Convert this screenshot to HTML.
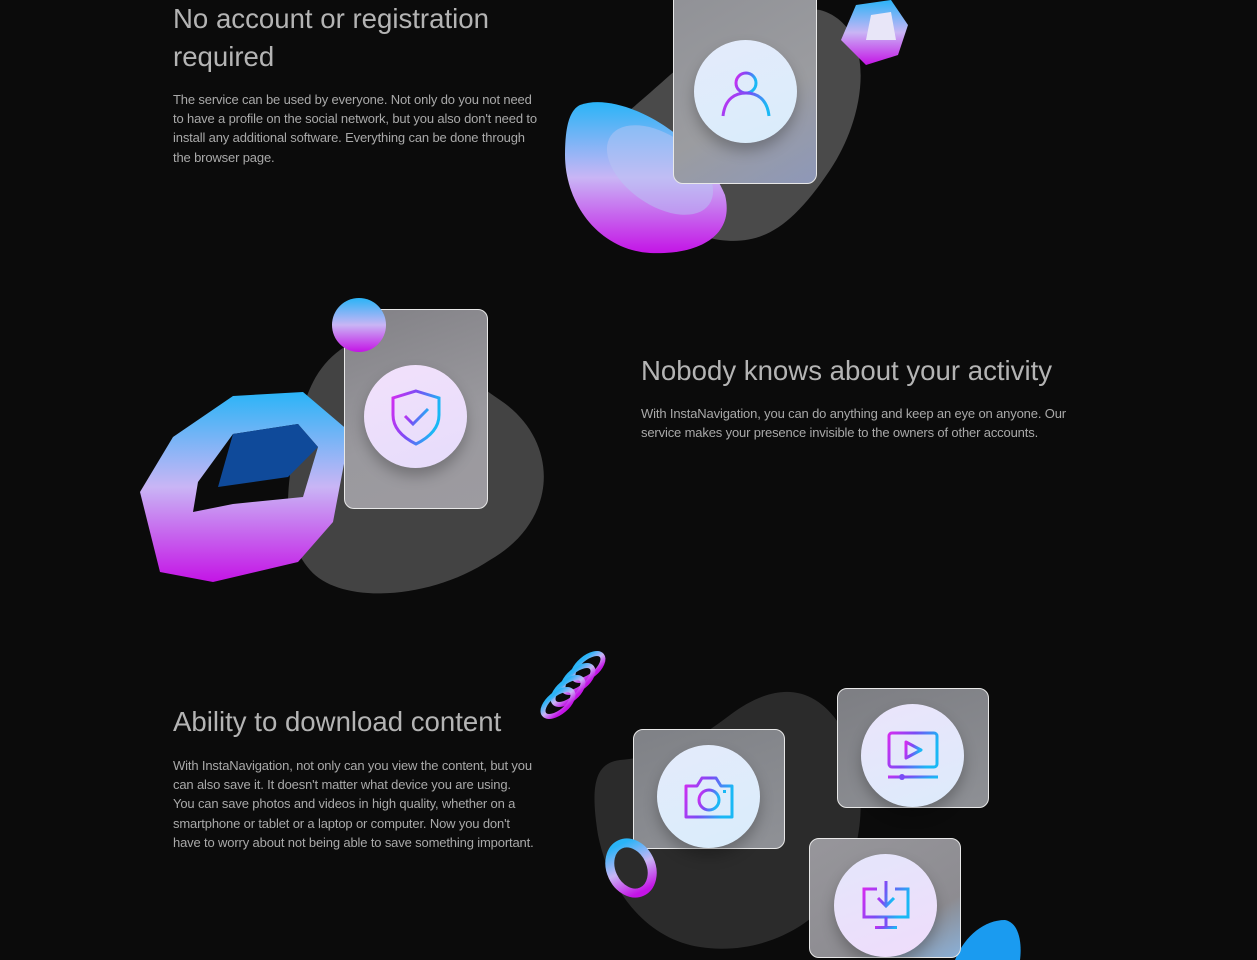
<!DOCTYPE html>
<html><head><meta charset="utf-8"><style>
*{margin:0;padding:0;box-sizing:border-box}
body{width:1257px;height:960px;background:#0b0b0b;overflow:hidden;position:relative;font-family:"Liberation Sans",sans-serif}
.a{position:absolute}
h2{position:absolute;color:#b4b4b4;font-weight:500;font-size:27.6px;line-height:38px;letter-spacing:0px;white-space:nowrap}
p{position:absolute;color:#a9a9a9;font-size:13px;line-height:19.2px;letter-spacing:-0.15px}
.card{position:absolute;border:1.5px solid #e8e8e8;border-radius:10px;background:linear-gradient(160deg,#8d8e92,#9a9a9e)}
.circ{position:absolute;border-radius:50%;background:linear-gradient(160deg,#e4ebfb,#d9ecfb);box-shadow:0 8px 14px rgba(0,0,0,.25)}
.circ svg{position:absolute;left:50%;top:50%;transform:translate(-50%,-50%)}
</style></head><body>
<svg width="0" height="0" style="position:absolute"><defs>
<linearGradient id="g" x1="0" y1="0" x2="1" y2="0.3"><stop offset="0" stop-color="#d42cf0"/><stop offset="0.5" stop-color="#7a4cf5"/><stop offset="1" stop-color="#1ab8f5"/></linearGradient>
<linearGradient id="obj" x1="0" y1="0" x2="0" y2="1"><stop offset="0" stop-color="#2ab4f7"/><stop offset="0.5" stop-color="#c9b5f5"/><stop offset="1" stop-color="#c414e6"/></linearGradient>
</defs></svg>

<!-- section 1 -->
<h2 style="left:173px;top:0">No account or registration<br>required</h2>
<p style="left:173px;top:90px;width:369px">The service can be used by everyone. Not only do you not need to have a profile on the social network, but you also don't need to install any additional software. Everything can be done through the browser page.</p>
<svg class="a" style="left:600px;top:0" width="270" height="250"><path d="M30 110 C90 60 140 0 220 10 C275 25 270 110 230 170 C190 230 160 245 120 240 C70 232 30 190 30 110Z" fill="#4a4a4a"/></svg>
<svg class="a" style="left:560px;top:95px" width="175" height="165"><path d="M20 10 C60 -5 140 40 165 100 C175 140 140 160 90 158 C40 155 5 110 5 60 C5 30 10 15 20 10Z" fill="url(#obj)"/><ellipse cx="100" cy="75" rx="60" ry="35" transform="rotate(35 100 75)" fill="#b8c6f4" opacity=".5"/></svg>
<div class="card" style="left:673px;top:-12px;width:144px;height:196px;background:linear-gradient(150deg,#909196,#9b9ca0 60%,#8e98b8)"></div>
<div class="circ" style="left:694px;top:40px;width:103px;height:103px"><svg width="52" height="52" viewBox="0 0 52 52"><circle cx="26" cy="17" r="10" fill="none" stroke="url(#g)" stroke-width="3"/><path d="M3 50 C5 32 16 27 26 27 C36 27 47 32 49 50" fill="none" stroke="url(#g)" stroke-width="3"/></svg></div>
<svg class="a" style="left:836px;top:0" width="75" height="68"><polygon points="20,5 55,0 72,25 62,55 30,65 5,40" fill="url(#obj)"/><polygon points="35,15 55,12 60,40 30,40" fill="#e8e6f8"/></svg>

<!-- section 2 -->
<svg class="a" style="left:280px;top:320px" width="275" height="280"><path d="M60 30 C120 -10 160 40 220 80 C280 120 280 200 210 240 C150 280 60 285 30 250 C-5 210 10 150 20 100 C28 65 40 45 60 30Z" fill="#434343"/></svg>
<svg class="a" style="left:138px;top:392px" width="220" height="195"><path fill-rule="evenodd" fill="url(#obj)" d="M95 4 L165 0 L212 40 L195 130 L160 170 L75 190 L22 180 L2 100 L35 45 Z M95 42 L160 32 L180 55 L165 105 L95 112 L55 120 L60 90 Z"/><path d="M95 42 L160 32 L180 55 L150 85 L80 95 Z" fill="#0f4a9a"/></svg>
<div class="card" style="left:344px;top:309px;width:144px;height:200px;background:linear-gradient(160deg,#828186,#9a999e 60%,#9d9ba0)"></div>
<div class="circ" style="left:364px;top:365px;width:103px;height:103px;background:linear-gradient(160deg,#f2e1fb,#e6dcfb)"><svg width="52" height="60" viewBox="0 0 52 60"><path d="M26 4 L49 11 L49 28 C49 42 38 51 26 57 C14 51 3 42 3 28 L3 11Z" fill="none" stroke="url(#g)" stroke-width="3"/><path d="M15 29 L23 37 L38 22" fill="none" stroke="url(#g)" stroke-width="3"/></svg></div>
<svg class="a" style="left:330px;top:296px" width="58" height="58"><circle cx="29" cy="29" r="27" fill="url(#obj)"/></svg>
<h2 style="left:641px;top:352px">Nobody knows about your activity</h2>
<p style="left:641px;top:404px;width:450px">With InstaNavigation, you can do anything and keep an eye on anyone. Our service makes your presence invisible to the owners of other accounts.</p>

<!-- section 3 -->
<h2 style="left:173px;top:703px">Ability to download content</h2>
<p style="left:173px;top:756px;width:362px">With InstaNavigation, not only can you view the content, but you can also save it. It doesn't matter what device you are using. You can save photos and videos in high quality, whether on a smartphone or tablet or a laptop or computer. Now you don't have to worry about not being able to save something important.</p>
<svg class="a" style="left:590px;top:685px" width="280" height="270"><path d="M30 75 C80 70 100 60 140 30 C180 0 220 -5 250 40 C275 80 280 150 250 200 C220 250 160 270 110 262 C60 255 20 210 8 150 C0 100 5 78 30 75Z" fill="#2b2b2b"/></svg>
<svg class="a" style="left:536px;top:647px" width="72" height="72"><g fill="none" stroke="url(#obj)" stroke-width="5"><ellipse cx="52" cy="20" rx="18" ry="9" transform="rotate(-40 52 20)"/><ellipse cx="42" cy="32" rx="18" ry="9" transform="rotate(-40 42 32)"/><ellipse cx="32" cy="44" rx="18" ry="9" transform="rotate(-40 32 44)"/><ellipse cx="22" cy="56" rx="18" ry="9" transform="rotate(-40 22 56)"/></g></svg>
<div class="card" style="left:633px;top:729px;width:152px;height:120px;background:linear-gradient(160deg,#7f8186,#8f9196)"></div>
<div class="circ" style="left:657px;top:745px;width:103px;height:103px"><svg width="52" height="46" viewBox="0 0 52 46"><path d="M3 12 H14 L19 4 H33 L38 12 H49 V43 H3Z" fill="none" stroke="url(#g)" stroke-width="3" stroke-linejoin="round"/><circle cx="26" cy="26" r="10" fill="none" stroke="url(#g)" stroke-width="3"/><rect x="40" y="16" width="3" height="3" fill="#1ab8f5"/></svg></div>
<div class="card" style="left:837px;top:688px;width:152px;height:120px;background:linear-gradient(160deg,#7d7e83,#8e9095)"></div>
<div class="circ" style="left:861px;top:704px;width:103px;height:103px;background:linear-gradient(160deg,#ebe4fb,#dcebfb)"><svg width="54" height="50" viewBox="0 0 54 50"><rect x="3" y="2" width="48" height="34" rx="3" fill="none" stroke="url(#g)" stroke-width="3"/><path d="M20 11 L35 19 L20 27Z" fill="none" stroke="url(#g)" stroke-width="3" stroke-linejoin="round"/><rect x="2" y="44.5" width="50" height="3" fill="url(#g)"/><circle cx="16" cy="46" r="3" fill="#7a4cf5"/></svg></div>
<svg class="a" style="left:604px;top:838px" width="54" height="60"><ellipse cx="27" cy="30" rx="20" ry="26" transform="rotate(-25 27 30)" fill="none" stroke="url(#obj)" stroke-width="9"/></svg>
<svg class="a" style="left:940px;top:915px" width="90" height="45"><path d="M15 45 C25 20 45 5 65 5 C80 8 82 30 80 45Z" fill="#1a9bf0"/></svg>
<div class="card" style="left:809px;top:838px;width:152px;height:120px;background:linear-gradient(150deg,#97969b,#8d8c91 70%,#8ab0d8)"></div>
<div class="circ" style="left:834px;top:854px;width:103px;height:103px;background:linear-gradient(160deg,#e4e6fb,#efdcfb)"><svg width="54" height="50" viewBox="0 0 54 50"><path d="M18 8 H5 V36 H49 V8 H36" fill="none" stroke="url(#g)" stroke-width="3"/><path d="M27 0 V24 M19 17 L27 25 L35 17" fill="none" stroke="url(#g)" stroke-width="3"/><rect x="25.5" y="36" width="3" height="10" fill="#7a4cf5"/><rect x="16" y="45" width="22" height="3" fill="url(#g)"/></svg></div>
</body></html>
